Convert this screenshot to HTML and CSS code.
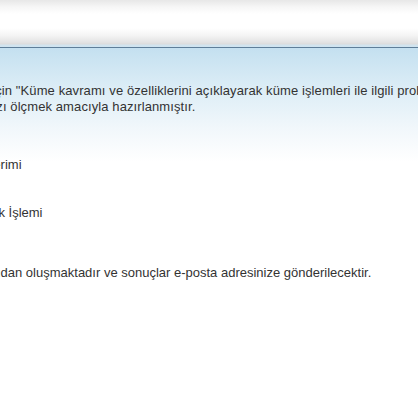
FILE: index.html
```html
<!DOCTYPE html>
<html lang="tr">
<head>
<meta charset="utf-8">
<title>Test Bilgilendirme</title>
<link rel="stylesheet" href="styles.css">
</head>
<body>
<div class="page">
  <header class="topbar"></header>
  <main class="content">
    <div class="inner">
      <p class="intro">Bu Test, 10. Sınıf matematik dersi için "Küme kavramı ve özelliklerini açıklayarak küme işlemleri ile ilgili problemleri<br>çözer" kazanımına yönelik başarınızı ölçmek amacıyla hazırlanmıştır.</p>
      <ul class="topics">
        <li>Kümenin Gösterimi</li>
        <li>Alt Küme</li>
        <li>Birleşim</li>
        <li>Kesişim Ve Fark İşlemi</li>
      </ul>
      <p class="note">Bu test, çoktan seçmeli 10 adet sorudan oluşmaktadır ve sonuçlar e-posta adresinize gönderilecektir.</p>
    </div>
  </main>
</div>
</body>
</html>
```

FILE: styles.css
```css
html, body {
  margin: 0;
  padding: 0;
  background: #ffffff;
}

.page {
  width: 418px;
  height: 418px;
  overflow: hidden;
  font-family: "Liberation Sans", Arial, sans-serif;
  font-size: 13px;
  line-height: 16px;
  color: #333333;
}

.topbar {
  height: 47px;
  border-bottom: 1px solid #5f7e98;
  background: linear-gradient(to bottom,
    #e7e7e7 0px,
    #f6f6f6 7px,
    #ffffff 14px,
    #ffffff 28px,
    #f3f3f3 36px,
    #e4e4e4 42px,
    #dcdcdc 44px,
    #d2e4ef 45px,
    #cfe3ef 47px);
}

.content {
  background: linear-gradient(to bottom,
    #c4e0f0 0px,
    #dcedf6 40px,
    #f1f7fb 80px,
    #ffffff 114px);
  padding-top: 35px;
  min-height: 370px;
}

.inner {
  margin-left: -209px;
  white-space: nowrap;
}

.intro {
  margin: 0;
  letter-spacing: 0.1px;
}

.topics {
  list-style: none;
  margin: 42px 0 0 0;
  padding: 0 0 0 120px;
}

.topics li {
  margin: 0;
}

.note {
  margin: 44px 0 0 0;
}
```
